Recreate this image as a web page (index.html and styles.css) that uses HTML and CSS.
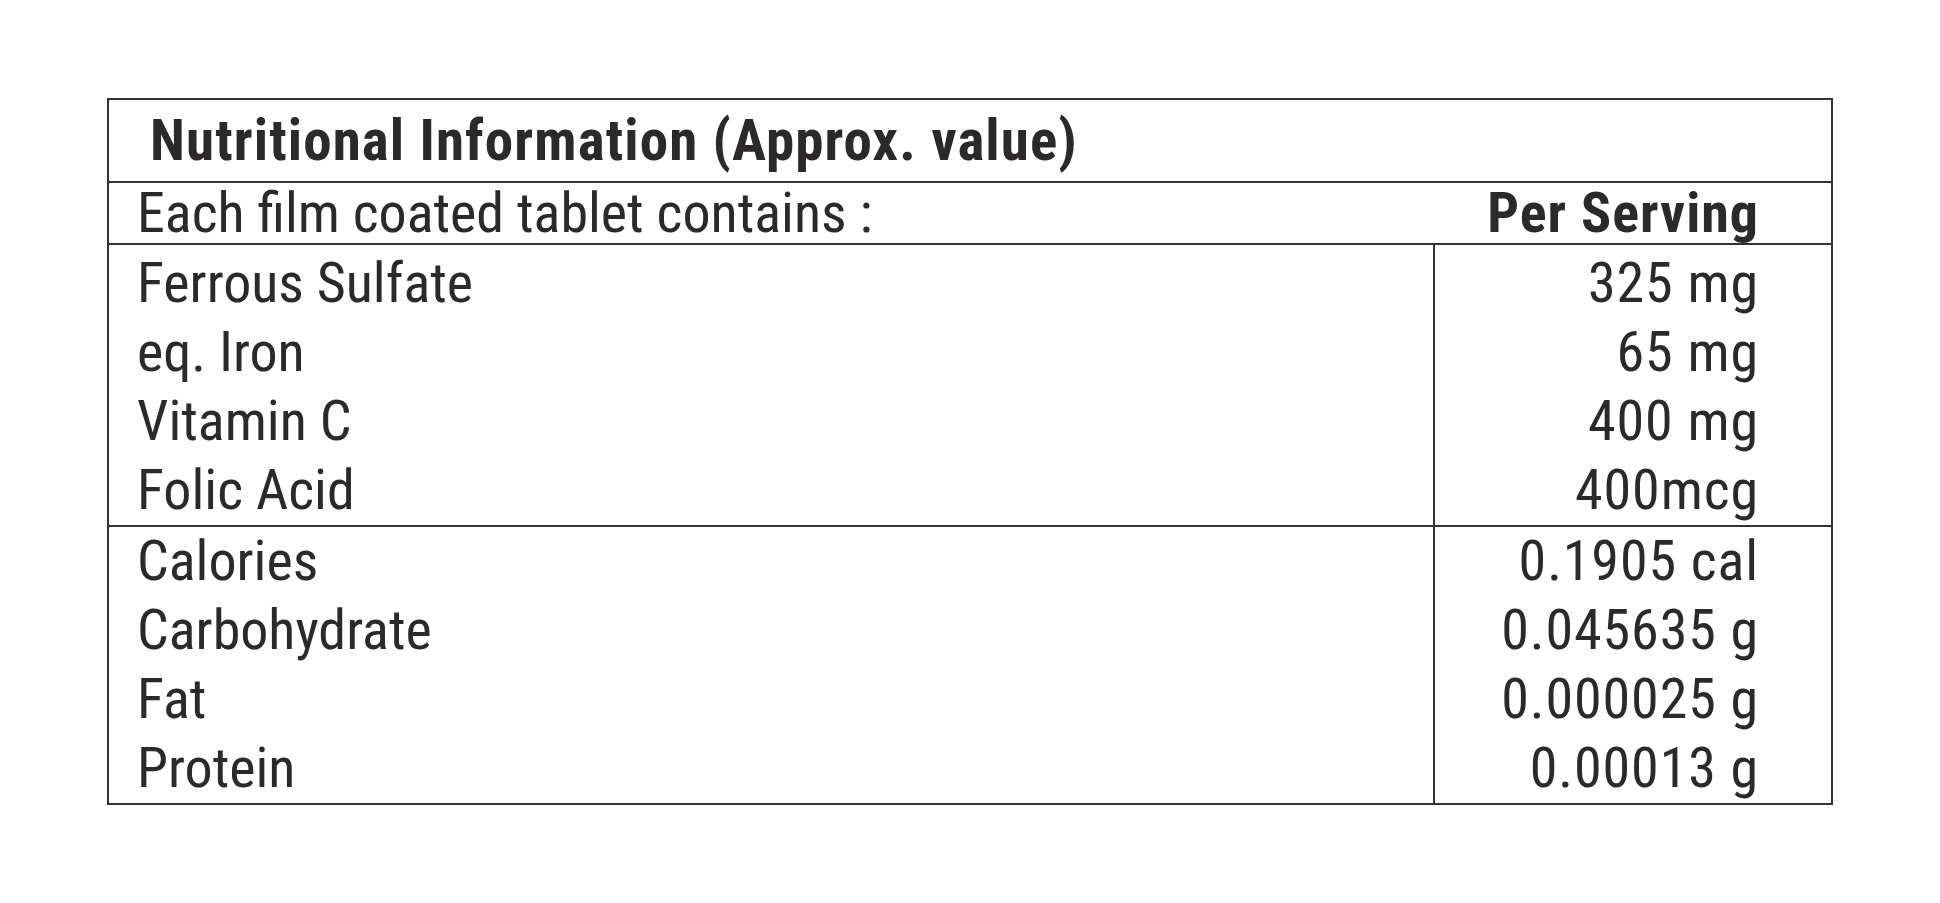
FILE: index.html
```
<!DOCTYPE html>
<html lang="en">
<head>
<meta charset="utf-8">
<title>Nutritional Information</title>
<link rel="stylesheet" href="styles.css">
</head>
<body>
<div class="panel">
  <div class="title">Nutritional Information (Approx. value)</div>
  <div class="head">
    <span class="head-label">Each film coated tablet contains :</span>
    <span class="head-value">Per Serving</span>
  </div>
  <div class="section first">
    <div class="names">
      <div class="row">Ferrous Sulfate</div>
      <div class="row">eq. Iron</div>
      <div class="row">Vitamin C</div>
      <div class="row">Folic Acid</div>
    </div>
    <div class="values">
      <div class="row">325 mg</div>
      <div class="row">65 mg</div>
      <div class="row">400 mg</div>
      <div class="row">400mcg</div>
    </div>
  </div>
  <div class="section second">
    <div class="names">
      <div class="row">Calories</div>
      <div class="row">Carbohydrate</div>
      <div class="row">Fat</div>
      <div class="row">Protein</div>
    </div>
    <div class="values">
      <div class="row">0.1905 cal</div>
      <div class="row">0.045635 g</div>
      <div class="row">0.000025 g</div>
      <div class="row">0.00013 g</div>
    </div>
  </div>
</div>
</body>
</html>
```
FILE: styles.css
```
html, body {
  margin: 0;
  padding: 0;
  background: #ffffff;
}

body {
  font-family: "Roboto Condensed", "Noto Sans", "DejaVu Sans", sans-serif;
  font-stretch: condensed;
  color: #2b2a29;
}

.panel {
  margin: 98px 0 0 107px;
  width: 1722px;
  border: 2px solid #333333;
}

.title {
  height: 81px;
  line-height: 81px;
  font-size: 57px;
  font-weight: bold;
  letter-spacing: 1.1px;
  padding-left: 41px;
  border-bottom: 2px solid #333333;
  white-space: nowrap;
}

.head {
  display: flex;
  justify-content: space-between;
  height: 60px;
  line-height: 60px;
  font-size: 56px;
  padding: 0 72px 0 28px;
  border-bottom: 2px solid #333333;
  white-space: nowrap;
}

.head-value {
  font-weight: bold;
  letter-spacing: 1px;
}

.section {
  display: grid;
  grid-template-columns: 1326px 1fr;
  font-size: 56px;
  line-height: 69px;
  white-space: nowrap;
}

.section.first {
  border-bottom: 2px solid #333333;
}

.names,
.values {
  display: flex;
  flex-direction: column;
}

.first .names,
.first .values {
  padding-top: 4px;
}

.names {
  padding-left: 28px;
  border-right: 2px solid #333333;
}

.values {
  align-items: flex-end;
  padding-right: 72px;
  letter-spacing: 0.9px;
}
```
